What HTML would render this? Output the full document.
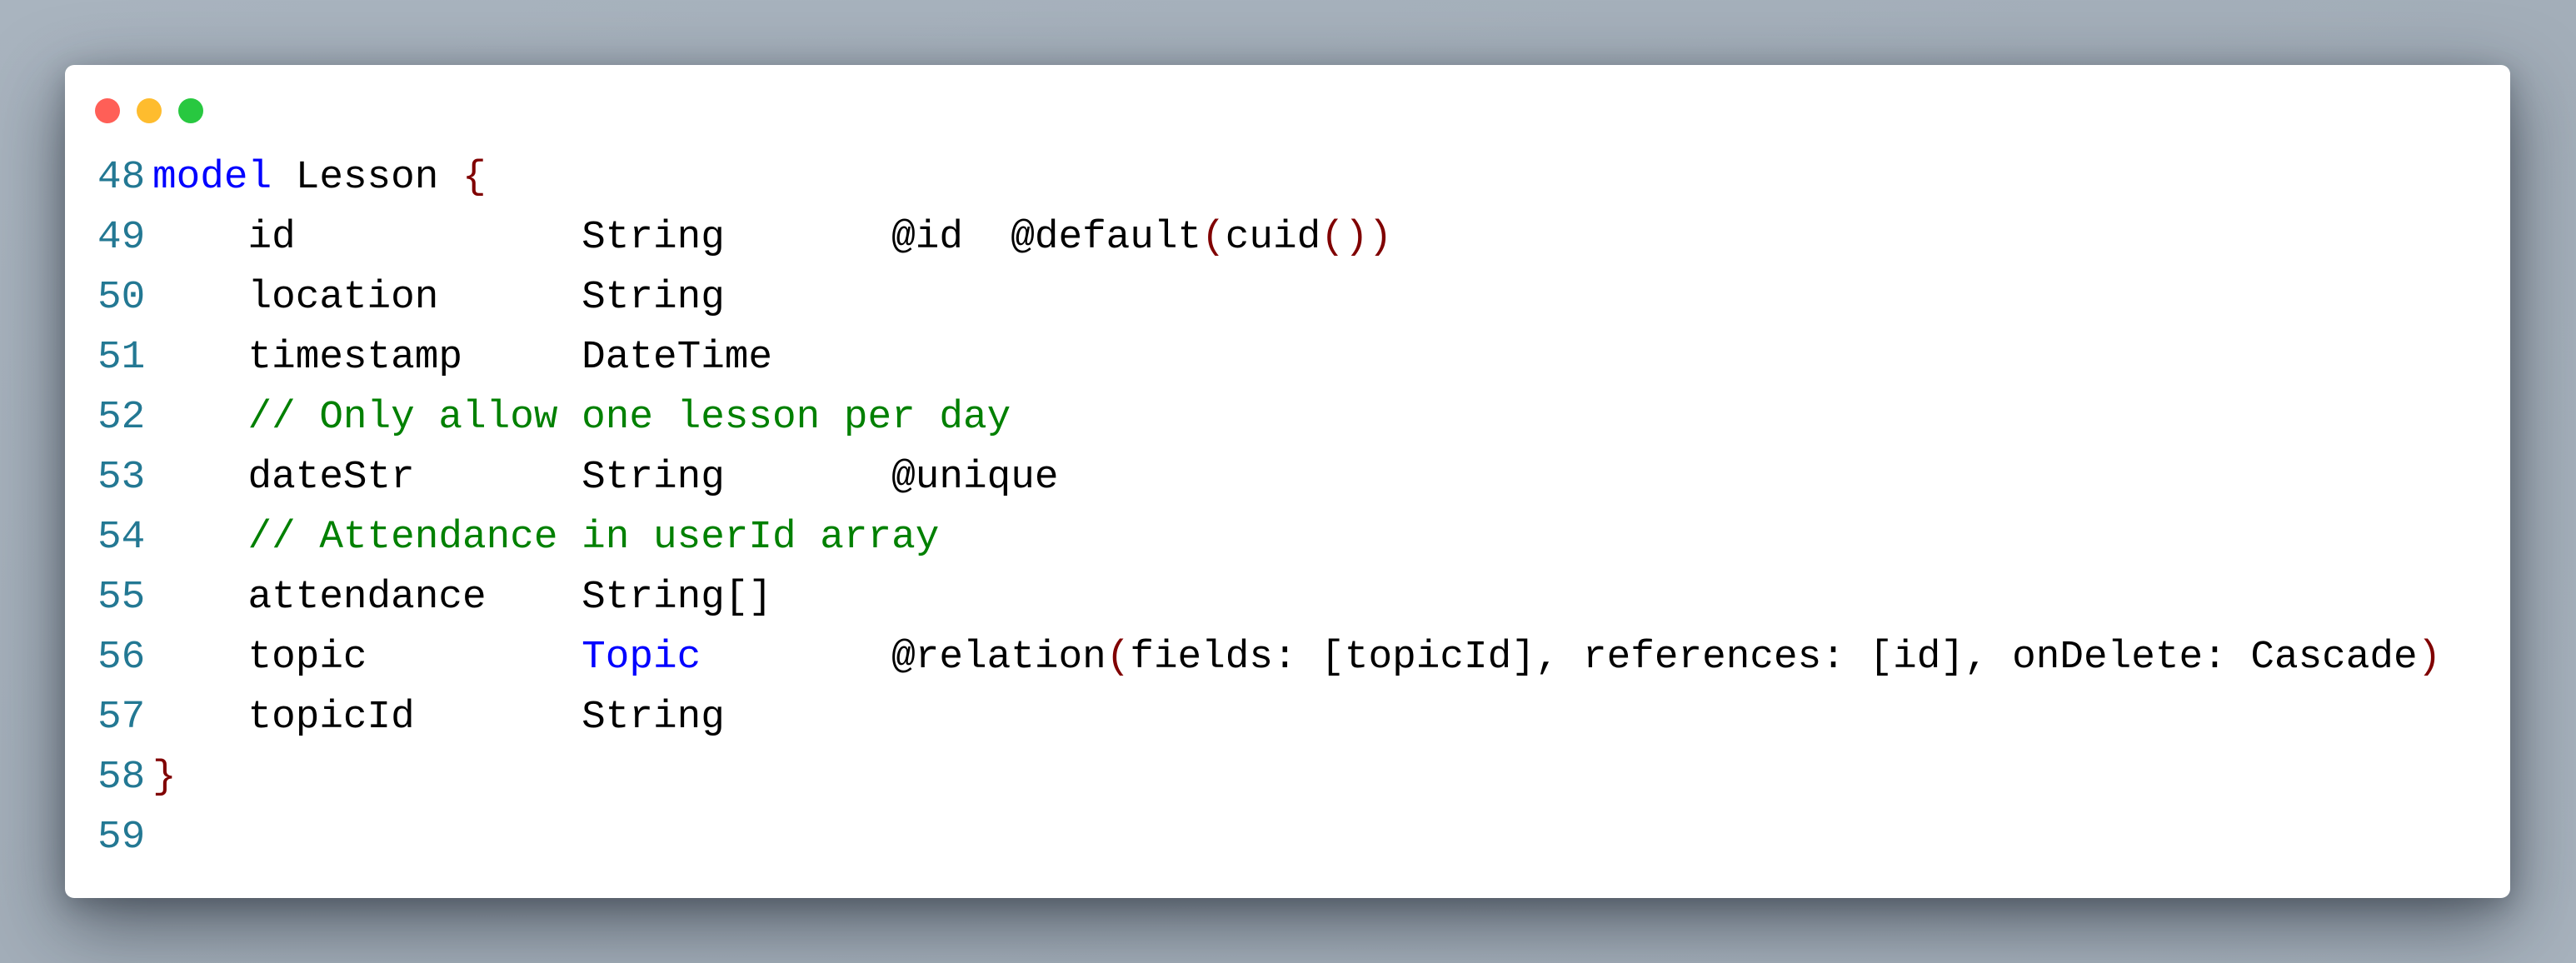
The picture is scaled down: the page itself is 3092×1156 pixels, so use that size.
<!DOCTYPE html>
<html><head><meta charset="utf-8"><style>
html,body{margin:0;padding:0;}
body{width:3092px;height:1156px;overflow:hidden;position:relative;
background:linear-gradient(160deg,#a9b4bf 0%,#a3aeb9 50%,#a7b2bd 100%);}
.win{position:absolute;left:78px;top:78px;width:2935px;height:1000px;background:#fff;border-radius:11px;
box-shadow:0 30px 90px rgba(20,28,38,0.55),0 8px 30px rgba(20,28,38,0.25);}
.dot{position:absolute;top:118px;width:30px;height:30px;border-radius:50%;}
.code{position:absolute;left:0;top:177px;width:3000px;font-family:"Liberation Mono","Courier New",monospace;font-size:47.7px;line-height:72px;color:#000;}
.r{position:relative;height:72px;}
.ln{position:absolute;left:117px;top:0;color:#237893;white-space:pre;}
.tx{position:absolute;left:183px;top:0;white-space:pre;}
.k{color:#0000ff}.b{color:#800000}.c{color:#008000}
</style></head><body>
<div class="win"></div>
<div class="dot" style="left:114px;background:#ff5f57"></div>
<div class="dot" style="left:164px;background:#febc2e"></div>
<div class="dot" style="left:214px;background:#28c840"></div>
<div class="code"><div class="r"><span class="ln">48</span><span class="tx"><span class="k">model</span> Lesson <span class="b">{</span></span></div><div class="r"><span class="ln">49</span><span class="tx">    id            String       @id  @default<span class="b">(</span>cuid<span class="b">())</span></span></div><div class="r"><span class="ln">50</span><span class="tx">    location      String</span></div><div class="r"><span class="ln">51</span><span class="tx">    timestamp     DateTime</span></div><div class="r"><span class="ln">52</span><span class="tx">    <span class="c">// Only allow one lesson per day</span></span></div><div class="r"><span class="ln">53</span><span class="tx">    dateStr       String       @unique</span></div><div class="r"><span class="ln">54</span><span class="tx">    <span class="c">// Attendance in userId array</span></span></div><div class="r"><span class="ln">55</span><span class="tx">    attendance    String[]</span></div><div class="r"><span class="ln">56</span><span class="tx">    topic         <span class="k">Topic</span>        @relation<span class="b">(</span>fields: [topicId], references: [id], onDelete: Cascade<span class="b">)</span></span></div><div class="r"><span class="ln">57</span><span class="tx">    topicId       String</span></div><div class="r"><span class="ln">58</span><span class="tx"><span class="b">}</span></span></div><div class="r"><span class="ln">59</span></div></div>
</body></html>
